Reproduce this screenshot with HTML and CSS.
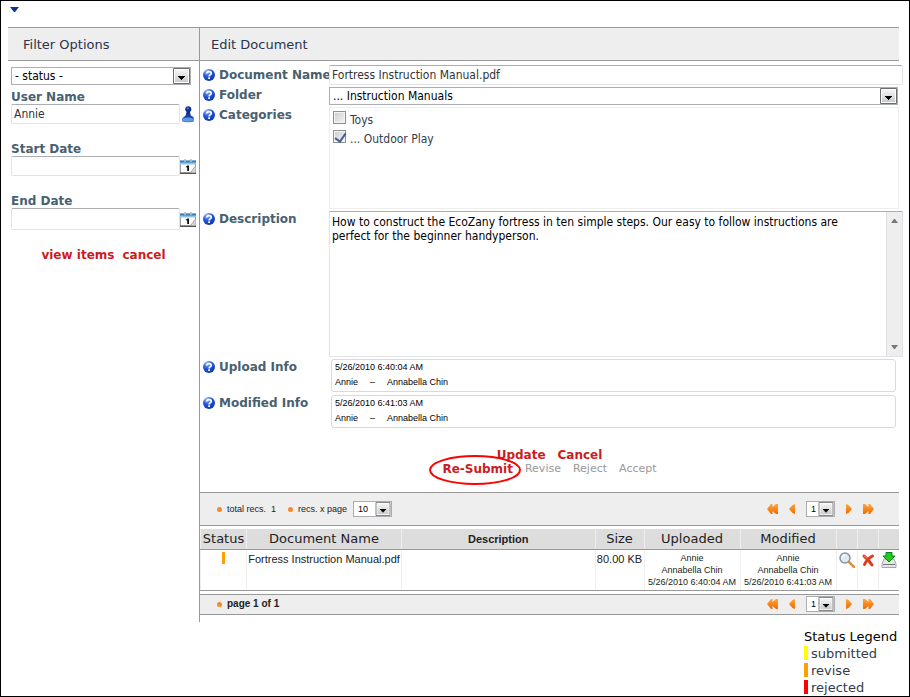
FILE: index.html
```html
<!DOCTYPE html>
<html lang="en">
<head>
<meta charset="utf-8">
<title>Edit Document</title>
<link rel="stylesheet" href="styles.css">
</head>
<body>
<svg class="defs" aria-hidden="true">
  <defs>
    <radialGradient id="blue" cx="35%" cy="20%" r="85%"><stop offset="0" stop-color="#9dbcf8"/><stop offset=".5" stop-color="#2458dc"/><stop offset="1" stop-color="#0d35a8"/></radialGradient>
    <linearGradient id="person" x1="0" y1="0" x2="0" y2="1"><stop offset="0" stop-color="#0b2a86"/><stop offset="1" stop-color="#2c62c8"/></linearGradient>
    <linearGradient id="orange" x1="0" y1="0" x2="0" y2="1"><stop offset="0" stop-color="#ffa53c"/><stop offset="1" stop-color="#f26a00"/></linearGradient>
    <linearGradient id="button" x1="0" y1="0" x2="0" y2="1"><stop offset="0" stop-color="#f4f4f4"/><stop offset="1" stop-color="#c9cccb"/></linearGradient>
    <symbol id="help" viewBox="0 0 12 12"><circle cx="6" cy="6" r="6" fill="url(#blue)"/><path d="M3.800 4.500Q4 2.600 6.100 2.600T8.200 4.300Q8.200 5.200 7.100 5.900T6.100 7.500" fill="none" stroke="#fff" stroke-width="1.700"/><rect x="5.200" y="8.300" width="1.800" height="1.700" fill="#fff"/></symbol>
    <symbol id="drop" viewBox="0 0 17 16"><path d="M.5.5h16v15H.5z" fill="#fff" stroke="#6e6e6e"/><path d="M2 2h13v12H2z" fill="url(#button)"/><path d="M5 8h7v1h-1v1h-1v1H9v1H8v-1H7v-1H6V9H5z" fill="#000"/></symbol>
    <symbol id="calendar" viewBox="0 0 16 16"><path d="M.5 4h15v10.500H.5z" fill="#fff" stroke="#9aa0a4"/><path d="M0 2h16v4H0z" fill="#8cc4ea"/><path d="M0 2h16v2H0z" fill="#3a7fbd"/><path d="M0 14h16v1.500H0z" fill="#555"/><path d="M5 .5v3M11 .5v3" stroke="#b8bec4" stroke-width="1.500"/><path d="M5.500 8.500l2-1.500h1.500v5.500H7.200V9z" fill="#111"/><path d="M11 14l4.500-6v6z" fill="#d7d7d7"/><path d="M11 13.500l4-5.500" stroke="#888" stroke-width=".8"/></symbol>
    <symbol id="prev" viewBox="0 0 6 10"><path d="M6 0v10L3.500 9 0 5l3.500-4z" fill="url(#orange)"/></symbol>
    <symbol id="next" viewBox="0 0 6 10"><path d="M0 0v10l2.500-1L6 5 2.500 1z" fill="url(#orange)"/></symbol>
    <symbol id="first" viewBox="0 0 11 10"><path d="M5.500 0v3L9 0h2v10H9L5.500 7v3H4L0 5l4-5z" fill="url(#orange)"/></symbol>
    <symbol id="last" viewBox="0 0 11 10"><path d="M5.500 0v3L2 0H0v10h2l3.500-3v3H7l4-5-4-5z" fill="url(#orange)"/></symbol>
  </defs>
</svg>
<button class="menu" aria-label="Menu"><svg viewBox="0 0 9 5"><path d="M0 0h9L5 5H4z" fill="#12318a"/></svg></button>
<main class="panel">
  <section class="filter">
    <h2 class="heading heading-filter">Filter Options</h2>
    <form class="filter-body">
      <span class="select status"><select aria-label="Status"><option>- status -</option></select><svg><use href="#drop"/></svg></span>
      <div class="field">
        <label for="user">User Name</label>
        <div class="entry"><input id="user" class="text" type="text" value="Annie">
          <button type="button" class="icon" aria-label="Select user"><svg viewBox="0 0 16 18"><path d="M6.500 6h3.500l1 4 3 2v4.500q-5.500 1.500-12 0V13l3.500-3z" fill="url(#person)"/><circle cx="8.300" cy="3.500" r="3.200" fill="#102f90"/><ellipse cx="7.800" cy="14.500" rx="5.500" ry="2.200" fill="#5a9be6"/><circle cx="7.800" cy="2.600" r="1.200" fill="#4674d0"/></svg></button></div>
      </div>
      <div class="field">
        <label for="start">Start Date</label>
        <div class="entry"><input id="start" class="text" type="text"><button type="button" class="icon" aria-label="Pick start date"><svg><use href="#calendar"/></svg></button></div>
      </div>
      <div class="field">
        <label for="end">End Date</label>
        <div class="entry"><input id="end" class="text tall" type="text"><button type="button" class="icon" aria-label="Pick end date"><svg><use href="#calendar"/></svg></button></div>
      </div>
      <div class="filter-actions"><a class="action" href="#">view items</a><a class="action" href="#">cancel</a></div>
    </form>
  </section>
  <section class="editor">
    <h2 class="heading">Edit Document</h2>
    <form>
      <div class="form">
        <div class="caption middle"><svg><use href="#help"/></svg><label for="name">Document Name</label></div>
        <input id="name" class="text wide" type="text" value="Fortress Instruction Manual.pdf">
        <div class="caption"><svg><use href="#help"/></svg><label for="folder">Folder</label></div>
        <span class="select folder"><select id="folder"><option>... Instruction Manuals</option></select><svg><use href="#drop"/></svg></span>
        <div class="caption"><svg><use href="#help"/></svg><span>Categories</span></div>
        <div class="categories">
          <label><input type="checkbox"><span>Toys</span></label>
          <label><input type="checkbox" checked><span>... Outdoor Play</span></label>
        </div>
        <div class="caption"><svg><use href="#help"/></svg><label for="description">Description</label></div>
        <div class="description wide"><textarea id="description">How to construct the EcoZany fortress in ten simple steps. Our easy to follow instructions are perfect for the beginner handyperson.</textarea>
          <div class="scroll"><svg viewBox="0 0 7 4"><path d="M0 4h7L4 0H3z" fill="#777"/></svg><svg viewBox="0 0 7 4"><path d="M0 0h7L4 4H3z" fill="#777"/></svg></div></div>
        <div class="caption"><svg><use href="#help"/></svg><span>Upload Info</span></div>
        <div class="info"><div>5/26/2010 6:40:04 AM</div><div class="who"><span>Annie</span><span>–</span><span>Annabella Chin</span></div></div>
        <div class="caption"><svg><use href="#help"/></svg><span>Modified Info</span></div>
        <div class="info"><div>5/26/2010 6:41:03 AM</div><div class="who"><span>Annie</span><span>–</span><span>Annabella Chin</span></div></div>
      </div>
      <div class="actions">
        <div class="line"><a class="action" href="#">Update</a><a class="action" href="#">Cancel</a></div>
        <div class="line"><a class="action resubmit" href="#">Re-Submit<svg viewBox="0 0 92 30"><ellipse cx="46" cy="15" rx="45" ry="14" fill="none" stroke="#f00" stroke-width="2"/></svg></a><span>Revise</span><span>Reject</span><span>Accept</span></div>
      </div>
    </form>
    <div class="bar">
      <span class="dot"></span><span class="count">total recs. &nbsp;1</span><span class="dot"></span><label for="size">recs. x page</label>
      <span class="select small ten"><select id="size"><option>10</option></select><svg><use href="#drop"/></svg></span>
      <nav class="pager">
        <a href="#" aria-label="First"><svg class="double"><use href="#first"/></svg></a><a href="#" aria-label="Previous"><svg><use href="#prev"/></svg></a>
        <span class="select small"><select aria-label="Page"><option>1</option></select><svg><use href="#drop"/></svg></span>
        <a href="#" aria-label="Next"><svg><use href="#next"/></svg></a><a href="#" aria-label="Last"><svg class="double"><use href="#last"/></svg></a>
      </nav>
    </div>
    <table>
      <colgroup><col class="c-status"><col class="c-name"><col><col class="c-size"><col class="c-date"><col class="c-date"><col class="c-icon"><col class="c-icon"><col class="c-icon"></colgroup>
      <thead><tr><th>Status</th><th>Document Name</th><th class="strong">Description</th><th>Size</th><th>Uploaded</th><th>Modified</th><th></th><th></th><th></th></tr></thead>
      <tbody><tr>
        <td><span class="mark revise"></span></td>
        <td class="name">Fortress Instruction Manual.pdf</td><td></td><td class="name">80.00 KB</td>
        <td>Annie<br>Annabella Chin<br>5/26/2010 6:40:04 AM</td>
        <td>Annie<br>Annabella Chin<br>5/26/2010 6:41:03 AM</td>
        <td><a href="#" aria-label="View"><svg viewBox="0 0 16 16"><path d="M10 10l5 5" stroke="#d9953c" stroke-width="2.500" stroke-linecap="round"/><circle cx="6" cy="6" r="5" fill="#dcebf8" stroke="#8d959c" stroke-width="1.500"/><path d="M3 6q0-3 3-3" fill="none" stroke="#fff" stroke-width="1.500"/></svg></a></td>
        <td><a href="#" aria-label="Delete"><svg viewBox="0 0 16 16"><path d="M4 4q5 4 8 9M12.500 4Q7 7 4.500 12.500" fill="none" stroke="#e23b1c" stroke-width="3" stroke-linecap="round"/><path d="M4 4l3 2" stroke="#f58a6d" stroke-linecap="round"/></svg></a></td>
        <td><a href="#" aria-label="Download"><svg viewBox="0 0 16 16"><path d="M3 7h10l2 5v3.500H1V12z" fill="#e3e5e6" stroke="#a3a6a8"/><path d="M2 12.500h12" stroke="#777"/><path d="M5 .5h6V4h3L8 10 2 4h3z" fill="#20cc20" stroke="#0b7c19"/></svg></a></td>
      </tr></tbody>
    </table>
    <div class="bar bar-bottom">
      <span class="dot"></span><strong>page 1 of 1</strong>
      <nav class="pager">
        <a href="#" aria-label="First"><svg class="double"><use href="#first"/></svg></a><a href="#" aria-label="Previous"><svg><use href="#prev"/></svg></a>
        <span class="select small"><select aria-label="Page"><option>1</option></select><svg><use href="#drop"/></svg></span>
        <a href="#" aria-label="Next"><svg><use href="#next"/></svg></a><a href="#" aria-label="Last"><svg class="double"><use href="#last"/></svg></a>
      </nav>
    </div>
  </section>
</main>
<aside class="legend">
  <h3>Status Legend</h3>
  <ul><li><span class="mark submitted"></span>submitted</li><li><span class="mark revise"></span>revise</li><li><span class="mark rejected"></span>rejected</li></ul>
</aside>
</body>
</html>
```
FILE: styles.css
```css
* { box-sizing: border-box; }
body {
  margin: 0;
  min-height: 100vh;
  padding: 0 10px 0 7px;
  border: 1px solid #000;
  background: #fff;
  color: #222;
  font: 12px/14px "DejaVu Sans Condensed", "DejaVu Sans", sans-serif;
}
h2, h3, ul { margin: 0; padding: 0; font-weight: normal; }
svg { display: block; }
.defs { position: absolute; width: 0; height: 0; }
button { display: block; padding: 0; border: 0; background: none; }
a { text-decoration: none; }
input, select, textarea { margin: 0; font: inherit; color: inherit; }

.menu { height: 26px; padding: 6px 2px 15px; }
.menu svg { width: 9px; height: 5px; }

.panel { display: flex; }
.filter { flex: 0 0 191px; }
.editor { flex: 1; min-width: 0; border-left: 1px solid #999; padding-bottom: 7px; }
.heading {
  height: 34px;
  padding-left: 11px;
  border: solid #999;
  border-width: 1px 0;
  background: #eee;
  color: #2b3350;
  font: 13px/33px "DejaVu Sans", sans-serif;
}
.heading-filter { padding-left: 15px; }

.text {
  display: block;
  height: 20px;
  padding: 0 2px;
  border: 1px solid #e2e3ea;
  border-top-color: #abadb3;
  border-radius: 2px;
  background: #fff;
  color: #333;
}
.tall { height: 22px; }
.select { position: relative; display: block; height: 18px; }
.select select {
  display: block;
  width: 100%;
  height: 100%;
  padding: 0 20px 0 3px;
  border: 1px solid #abadb3;
  border-radius: 0;
  background: #fff;
  color: #000;
  appearance: none;
}
.select svg { position: absolute; top: 1px; right: 1px; width: 17px; height: 16px; pointer-events: none; }

.filter-body { padding: 6px 3px 0; }
.status { width: 180px; margin-bottom: 5px; }
.field { margin-bottom: 18px; }
.field label { display: block; }
.entry { display: flex; align-items: center; }
.entry .text { flex: 1; min-width: 0; }
.icon { flex: 0 0 16px; }
.icon svg { width: 16px; height: 17px; }
.field label, .caption, .action { font: bold 12px/14px "DejaVu Sans", sans-serif; }
.field label, .caption { color: #48606f; }
.action { color: #cc1b22; }
.filter-actions { display: flex; justify-content: center; gap: 8px; }

.form {
  display: grid;
  grid-template-columns: 126px 1fr;
  gap: 2px 0;
  padding: 4px 0 0 3px;
}
.caption { display: flex; gap: 4px; height: 16px; align-items: center; white-space: nowrap; }
.caption svg { flex: none; width: 12px; height: 12px; }
.middle { align-self: center; }
.wide { margin-right: -4px; }
.folder { margin-right: 1px; }
.categories { height: 102px; padding: 3px; border: 1px solid #eee; }
.categories label { display: flex; height: 19px; gap: 4px; color: #333c4a; }
.categories label span { padding-top: 2px; }
.categories input {
  width: 13px;
  height: 13px;
  border: 1px solid #8e8f8f;
  background: linear-gradient(135deg, #ccc, #f6f6f6);
  box-shadow: inset 0 0 0 1px #f4f4f4;
  appearance: none;
}
.categories input:checked::after {
  content: "";
  display: block;
  width: 5px;
  height: 9px;
  margin: 0 0 0 3px;
  border: solid #4a5f97;
  border-width: 0 2px 2px 0;
  rotate: 35deg;
}
.description {
  display: flex;
  height: 146px;
  border: 1px solid #e2e3ea;
  border-top-color: #abadb3;
}
.description textarea { flex: 1; min-width: 0; padding: 3px 16px 3px 2px; border: 0; background: none; color: #000; resize: none; overflow: hidden; }
.scroll {
  display: flex;
  flex-direction: column;
  justify-content: space-between;
  align-items: center;
  width: 16px;
  padding: 7px 0;
  border-left: 1px solid #e0e2e6;
  background: #eee;
}
.scroll svg { width: 7px; height: 4px; }
.info {
  height: 33px;
  margin: 0 3px 1px 2px;
  padding: 0 3px;
  border: 1px solid #d3dbe4;
  border-radius: 3px;
  color: #000;
  font: 9px/15px "Liberation Sans", sans-serif;
}
.who { display: flex; gap: 12px; }

.actions { padding: 19px 0 16px; }
.line { display: flex; justify-content: center; gap: 12px; color: #999; font: 11px/14px "DejaVu Sans", sans-serif; }
.resubmit { position: relative; }
.resubmit svg { position: absolute; top: -7px; left: -13px; width: 92px; height: 30px; }

.bar {
  display: flex;
  align-items: center;
  height: 34px;
  padding: 0 25px 0 17px;
  border: solid #999;
  border-width: 1px 0;
  background: #eee;
  font: 9px/12px "Liberation Sans", sans-serif;
}
.bar-bottom { height: 21px; }
.bar strong { font-size: 10px; }
.dot { width: 5px; height: 5px; margin-right: 5px; border-radius: 50%; background: #f98a2a; }
.count { margin-right: 12px; }
.small { width: 29px; height: 16px; }
.small svg { width: 16px; height: 14px; }
.small select { padding: 0 0 0 4px; }
.ten { width: 39px; margin-left: 6px; }
.pager { display: flex; align-items: center; gap: 11px; margin-left: auto; }
.pager a svg { width: 6px; height: 10px; }
.pager a .double { width: 11px; }

table { width: 100%; margin: 3px 0; border-collapse: collapse; table-layout: fixed; color: #222; }
th, td { padding: 0; border-left: 1px solid #eee; border-bottom: 1px solid #999; text-align: center; }
th { height: 20px; background: #ddd; font: 13px/18px "DejaVu Sans", sans-serif; white-space: nowrap; }
th.strong { font: bold 11px/18px "Liberation Sans", sans-serif; }
td { height: 41px; padding-top: 2px; vertical-align: top; font: 9px/12px "Liberation Sans", sans-serif; white-space: nowrap; }
td.name { font-size: 11px; line-height: 15px; }
td svg { width: 16px; height: 16px; margin: 0 auto; }
.c-status { width: 46px; }
.c-name { width: 155px; }
.c-size { width: 49px; }
.c-date { width: 96px; }
.c-icon { width: 21px; }
.mark { display: inline-block; width: 4px; height: 14px; }
td .mark { width: 3px; height: 12px; }
.submitted { background: #ff0; }
.revise { background: #ffa000; }
.rejected { background: #f00; }

.legend { width: 95px; margin: 6px 0 0 auto; font: 13px/17px "DejaVu Sans", sans-serif; color: #333c4a; white-space: nowrap; }
.legend h3 { color: #000; font: inherit; }
.legend ul { list-style: none; }
.legend li { display: flex; align-items: center; gap: 3px; }
```
